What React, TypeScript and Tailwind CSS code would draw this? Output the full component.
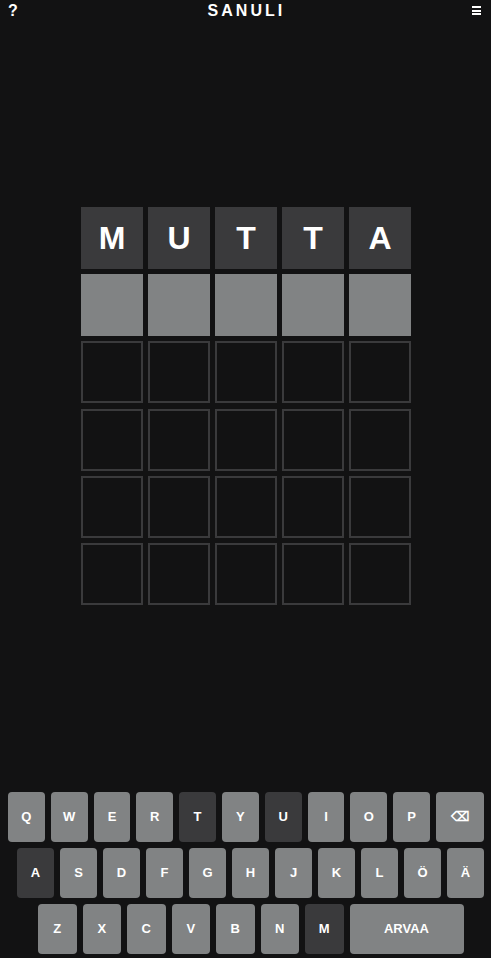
const rows: { letters: string; kind: "absent" | "current" | "empty" }[] = [
  { letters: "MUTTA", kind: "absent" },
  { letters: "     ", kind: "current" },
  { letters: "     ", kind: "empty" },
  { letters: "     ", kind: "empty" },
  { letters: "     ", kind: "empty" },
  { letters: "     ", kind: "empty" },
];

const used = new Set(["M", "U", "T", "A"]);

const Key = ({ label, wide }: { label: string; wide?: string }) => {
  const dark = used.has(label);
  return (
    <button
      className={`h-[50px] shrink-0 rounded-[4px] flex items-center justify-center text-[13px] font-bold text-white ${
        wide ?? "w-[37px]"
      } ${dark ? "bg-[#3a3a3c]" : "bg-[#818384]"}`}
    >
      {label}
    </button>
  );
};

export default function App() {
  return (
    <div
      className="w-full h-[958px] bg-[#121213] text-white flex flex-col overflow-hidden"
      style={{ fontFamily: "'Liberation Sans', Arial, sans-serif" }}
    >
      {/* Header */}
      <header className="h-[22px] shrink-0 flex items-center justify-between px-[8px]">
        <span className="text-[16px] font-bold leading-none">?</span>
        <h1 className="text-[16px] font-bold leading-none tracking-[3px] pl-[3px]">SANULI</h1>
        <span className="w-[9px] mr-[2px] flex flex-col gap-[1.5px] mb-[1px]">
          <span className="h-[2px] bg-white" />
          <span className="h-[2px] bg-white" />
          <span className="h-[2px] bg-white" />
        </span>
      </header>

      {/* Board */}
      <main className="flex-1 flex items-center justify-center pb-[2px]">
        <div className="flex flex-col gap-[5.4px] pl-[1px]">
          {rows.map((row, r) => (
            <div key={r} className="flex gap-[5px]">
              {row.letters.split("").map((ch, i) => (
                <div
                  key={i}
                  className={`w-[62px] h-[62px] flex items-center justify-center text-[32px] font-bold ${
                    row.kind === "absent"
                      ? "bg-[#3a3a3c]"
                      : row.kind === "current"
                        ? "bg-[#818384]"
                        : "border-2 border-[#3a3a3c]"
                  }`}
                >
                  {ch.trim()}
                </div>
              ))}
            </div>
          ))}
        </div>
      </main>

      {/* Keyboard */}
      <div className="shrink-0 flex flex-col gap-[6px] pb-[4px]">
        <div className="flex gap-[6px] pl-[8px]">
          {"QWERTYUIOP".split("").map((k) => (
            <Key key={k} label={k} wide="w-[36.8px]" />
          ))}
          <button className="h-[50px] w-[48px] shrink-0 rounded-[4px] bg-[#818384] flex items-center justify-center text-[13px] font-bold text-white">
            ⌫
          </button>
        </div>
        <div className="flex gap-[6px] pl-[17px]">
          {"ASDFGHJKLÖÄ".split("").map((k) => (
            <Key key={k} label={k} />
          ))}
        </div>
        <div className="flex gap-[6px] pl-[38px]">
          {"ZXCVBNM".split("").map((k) => (
            <Key key={k} label={k} wide="w-[38.5px]" />
          ))}
          <button className="h-[50px] w-[114px] shrink-0 rounded-[4px] bg-[#818384] flex items-center justify-center text-[13px] font-bold text-white">
            ARVAA
          </button>
        </div>
      </div>
    </div>
  );
}
